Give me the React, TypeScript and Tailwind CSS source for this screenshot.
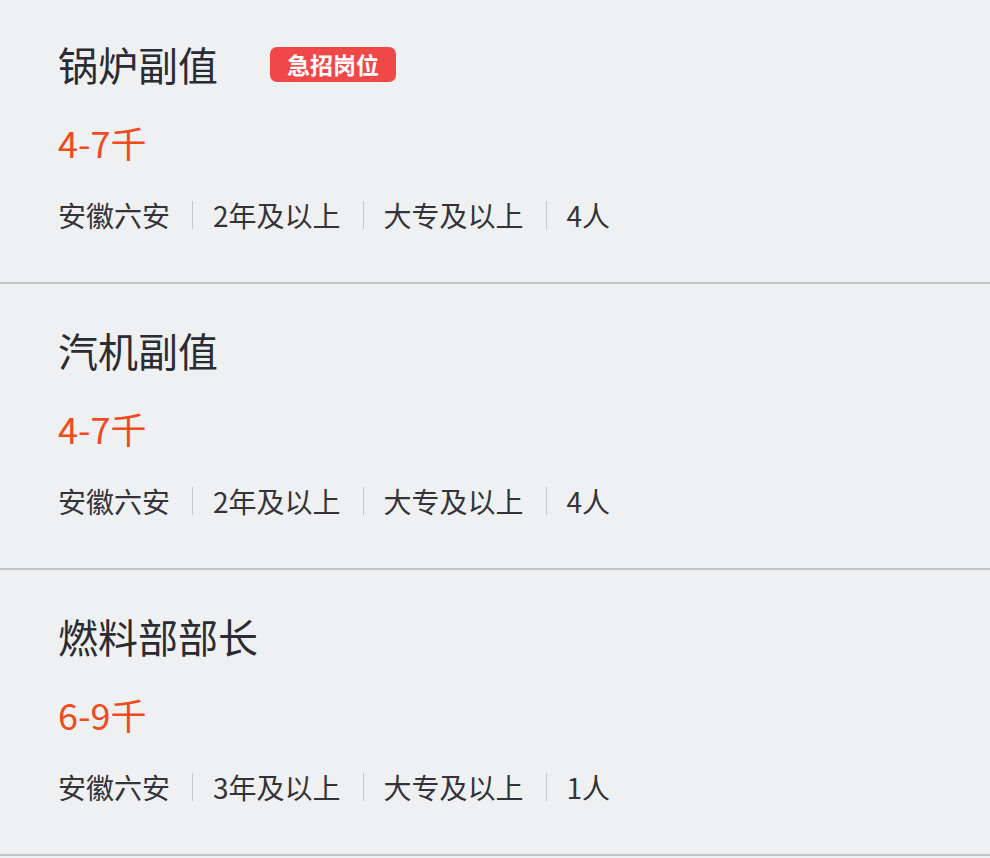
type Job = {
  title: string;
  salary: string;
  meta: string[];
  urgent?: boolean;
};

const jobs: Job[] = [
  {
    title: "锅炉副值",
    salary: "4-7千",
    meta: ["安徽六安", "2年及以上", "大专及以上", "4人"],
    urgent: true,
  },
  {
    title: "汽机副值",
    salary: "4-7千",
    meta: ["安徽六安", "2年及以上", "大专及以上", "4人"],
  },
  {
    title: "燃料部部长",
    salary: "6-9千",
    meta: ["安徽六安", "3年及以上", "大专及以上", "1人"],
  },
];

const JobCard = ({ job, first }: { job: Job; first: boolean }) => (
  <div
    className={`border-b-2 border-[#bcc5cf] pl-[58px] pb-[49px] ${
      first ? "pt-[40px]" : "pt-[42px]"
    }`}
  >
    <div className="flex h-[48px] items-center">
      <h2 className="text-[40px] leading-[48px] font-normal text-[#2a2b33]">
        {job.title}
      </h2>
      {job.urgent && (
        <span className="ml-[52px] flex h-[35px] items-center rounded-[7px] bg-[#f04848] px-[17px] text-[23px] font-bold leading-none text-white">
          急招岗位
        </span>
      )}
    </div>

    <p className="mt-[34px] text-[36px] leading-[40px] text-[#f04a1e]">
      {job.salary}
    </p>

    <div className="mt-[35px] flex h-[36px] items-center text-[28px] leading-[36px] text-[#333338]">
      {job.meta.map((item, i) => (
        <div key={i} className="flex items-center">
          {i > 0 && (
            <span className="ml-[22px] mr-[20px] h-[28px] w-px bg-[#c2c8d0]" />
          )}
          <span>{item}</span>
        </div>
      ))}
    </div>
  </div>
);

export default function App() {
  return (
    <div
      className="h-[858px] w-[990px] overflow-hidden bg-[#eff0f2]"
      style={{ fontFamily: '"Noto Sans CJK SC", "Noto Sans", sans-serif' }}
    >
      {jobs.map((job, i) => (
        <JobCard key={job.title} job={job} first={i === 0} />
      ))}
    </div>
  );
}
